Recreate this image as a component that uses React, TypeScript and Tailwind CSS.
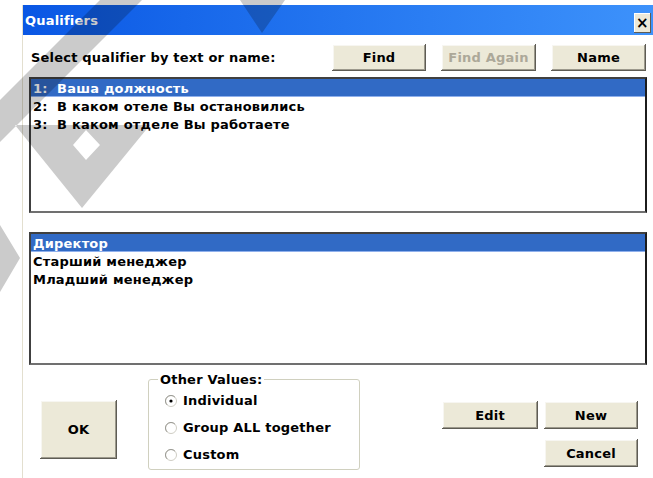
import React from "react";

type BtnProps = {
  label: string;
  className?: string;
  disabled?: boolean;
};

// classic raised dialog button
function DlgButton({ label, className = "", disabled }: BtnProps) {
  return (
    <button
      className={`flex items-center justify-center bg-[#ece9d8] shadow-[inset_-1px_-1px_#5e5c54,inset_1px_1px_#ffffff,inset_-2px_-2px_#9c998c,inset_2px_2px_#f7f6f1] ${
        disabled ? "text-[#aca899]" : "text-black"
      } ${className}`}
    >
      {label}
    </button>
  );
}

function Radio({ label, checked }: { label: string; checked?: boolean }) {
  return (
    <div className="flex h-[27px] items-center gap-[6px]">
      <svg width="12" height="12" viewBox="0 0 12 12">
        <circle cx="6" cy="6" r="5.5" fill="#fff" stroke="#cfcdc4" />
        <path d="M2.1 9.9 A5.5 5.5 0 0 1 9.9 2.1" stroke="#9a9a94" fill="none" />
        {checked && <circle cx="6" cy="6" r="1.6" fill="#000" />}
      </svg>
      <span>{label}</span>
    </div>
  );
}

function ListRow({ text, selected }: { text: string; selected?: boolean }) {
  return (
    <div
      className={`flex h-[18px] items-center whitespace-pre pl-[2px] ${
        selected
          ? "bg-[#316ac5] text-white shadow-[inset_0_-1px_#8fb0ec]"
          : "text-black"
      }`}
    >
      {text}
    </div>
  );
}

const qualifiers = [
  "1:  Ваша должность",
  "2:  В каком отеле Вы остановились",
  "3:  В каком отделе Вы работаете",
];

const values = ["Директор", "Старший менеджер", "Младший менеджер"];

export default function App() {
  return (
    <div className="relative h-[478px] w-[653px] overflow-hidden bg-white font-['DejaVu_Sans',sans-serif] text-[13px] font-bold leading-[15px] tracking-[0.2px] text-black">
      <div className="ml-[22px] mt-[5px] h-[473px] border-l border-[#e3dfcf]">
        {/* Title bar */}
        <div className="flex h-[30px] items-center justify-between bg-linear-to-r from-[#0a57e4] to-[#3d92fb] pl-[2px] pr-[2px]">
          <span className="text-[13px] text-white">Qualifiers</span>
          <button className="mb-[2px] flex h-[20px] w-[17px] items-center justify-center self-end bg-[#ece9d8] text-[15px] leading-none text-black shadow-[inset_-1px_-1px_#5e5c54,inset_1px_1px_#ffffff]">
            ×
          </button>
        </div>

        <div className="px-[6px]">
          {/* Search row */}
          <div className="mt-[9px] flex h-[27px] items-center">
            <span className="ml-[2px]">Select qualifier by text or name:</span>
            <div className="ml-auto mr-[1px] flex gap-[15px]">
              <DlgButton label="Find" className="h-[27px] w-[94px]" />
              <DlgButton label="Find Again" disabled className="h-[27px] w-[95px]" />
              <DlgButton label="Name" className="h-[27px] w-[95px]" />
            </div>
          </div>

          {/* Qualifier list */}
          <div className="mt-[6px] h-[136px] border-2 border-t-[#404040] border-l-[#404040] border-r-[#1c1c1c] border-b-[#707070] bg-white">
            {qualifiers.map((q, i) => (
              <ListRow key={q} text={q} selected={i === 0} />
            ))}
          </div>

          {/* Values list */}
          <div className="mt-[19px] h-[133px] border-2 border-t-[#404040] border-l-[#404040] border-r-[#1c1c1c] border-b-[#707070] bg-white">
            {values.map((v, i) => (
              <ListRow key={v} text={v} selected={i === 0} />
            ))}
          </div>

          {/* Bottom controls */}
          <div className="flex">
            <DlgButton label="OK" className="ml-[11px] mt-[35px] h-[59px] w-[77px]" />

            <fieldset className="ml-[31px] mt-[7px] w-[212px] rounded-[3px] border border-[#d0d0bf] pb-[1px] pl-[16px]">
              <legend className="-ml-[7px] px-[2px]">Other Values:</legend>
              <Radio label="Individual" checked />
              <Radio label="Group ALL together" />
              <Radio label="Custom" />
            </fieldset>

            <div className="ml-[82px] mt-[36px] grid grid-cols-[96px_94px] gap-x-[6px] gap-y-[7px]">
              <DlgButton label="Edit" className="h-[28px]" />
              <DlgButton label="New" className="h-[28px]" />
              <DlgButton label="Cancel" className="col-start-2 h-[28px]" />
            </div>
          </div>
        </div>
      </div>

      {/* diagonal watermark over the dialog */}
      <svg
        className="pointer-events-none absolute left-0 top-0 opacity-20"
        width="653"
        height="478"
        viewBox="0 0 653 478"
      >
        <path
          fillRule="evenodd"
          d="M100 0 L142 0 L0 142 L0 100 Z M15 125 L150 125 L82 208 Z M86 130 L100 145 L86 160 L73 145 Z M240 0 L285 0 L262 33 Z M0 225 L20 258 L0 292 Z"
          fill="#000"
        />
      </svg>
    </div>
  );
}
